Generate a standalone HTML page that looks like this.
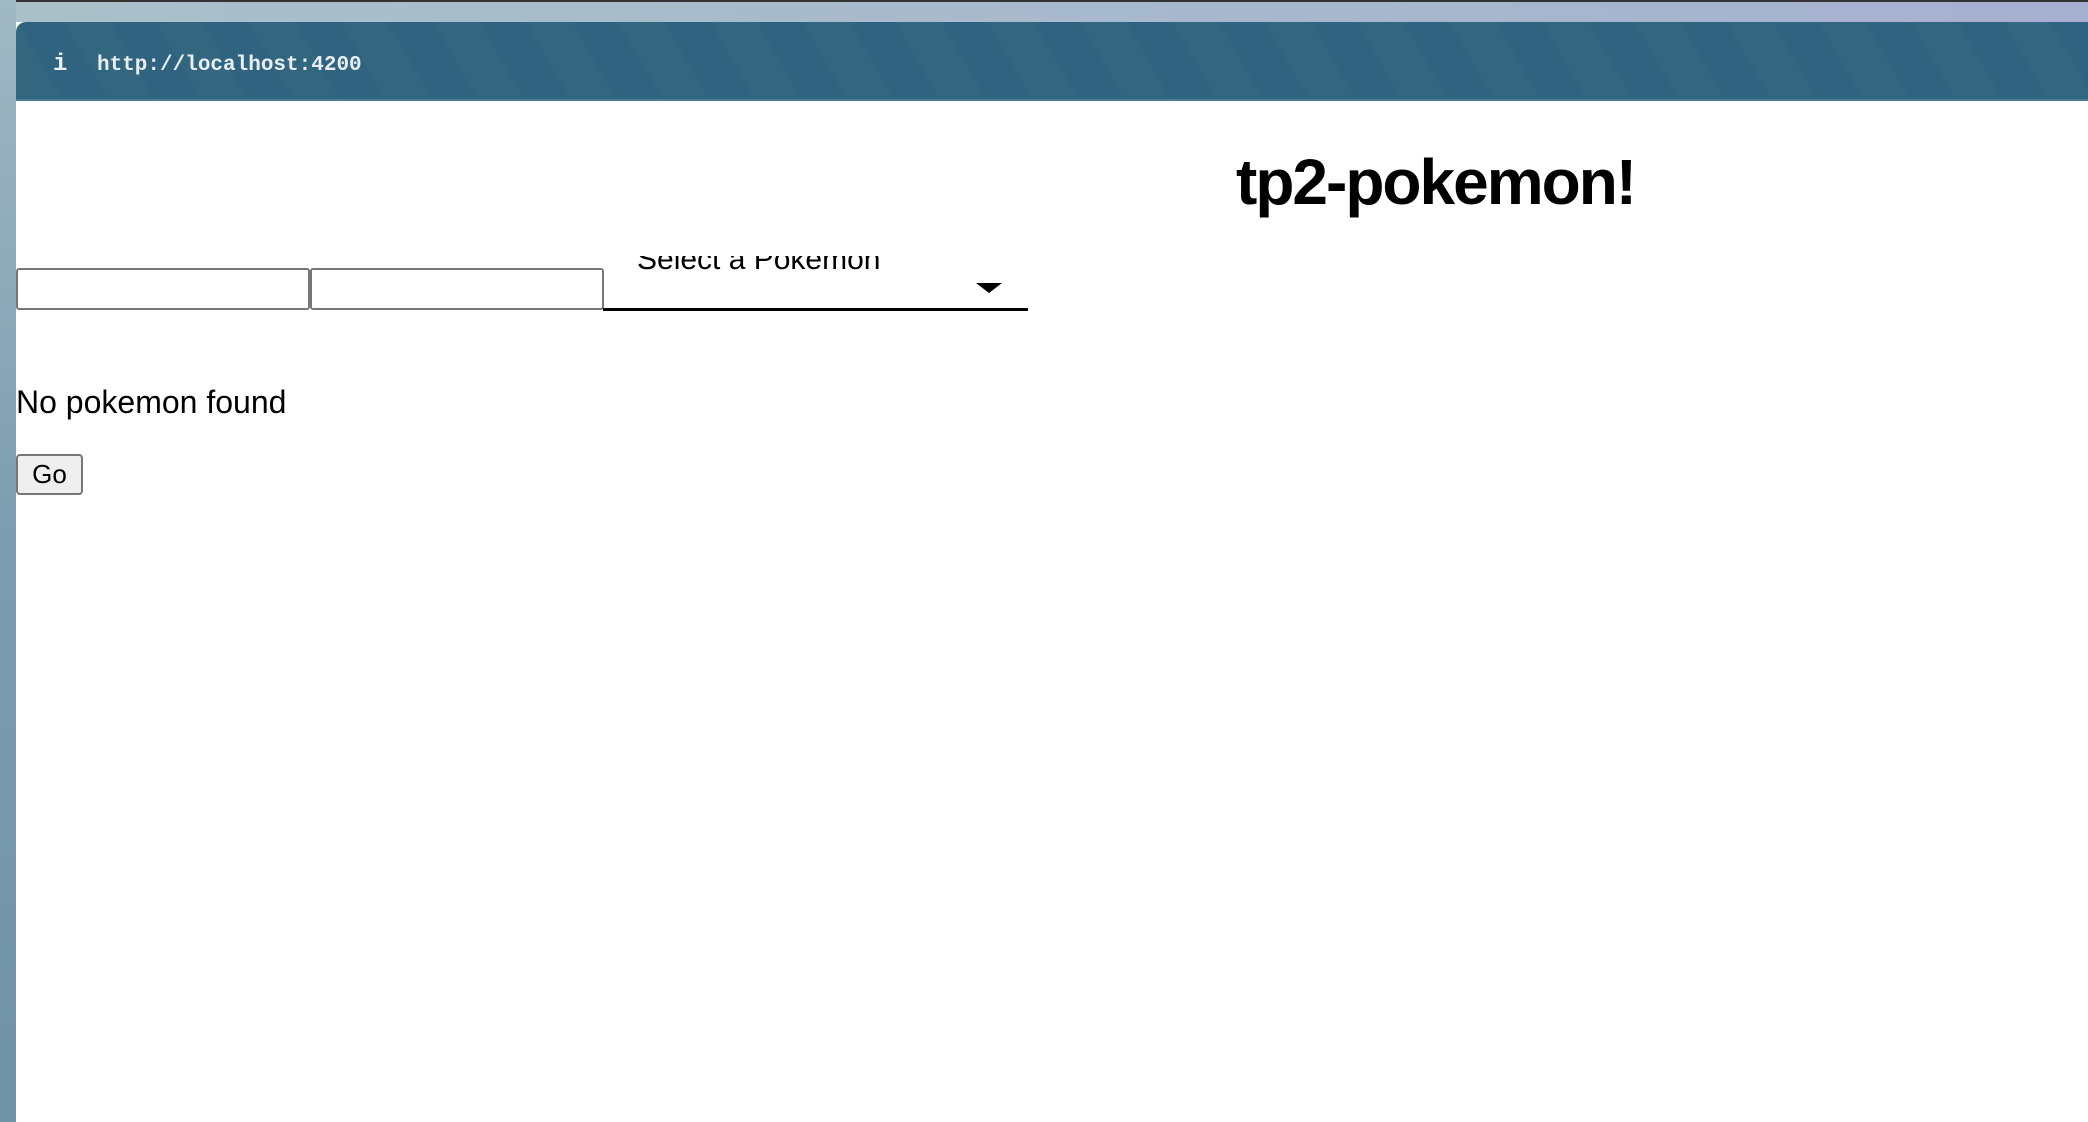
<!DOCTYPE html>
<html><head><meta charset="utf-8"><style>
html,body{margin:0;padding:0;width:2088px;height:1122px;overflow:hidden;background:#fff;font-family:"Liberation Sans",sans-serif;}
#left{position:absolute;left:0;top:0;width:16px;height:1122px;background:linear-gradient(#9fb8c4,#7a9cb0 50%,#6f93a8);}
#top{position:absolute;left:0;top:0;width:2088px;height:22px;background:linear-gradient(90deg,#a9c0c9,#a7b8cc 60%,#a6b0d0);border-top:2px solid #333;box-sizing:border-box;}
#hdr{position:absolute;left:16px;top:22px;width:2072px;height:79px;background:repeating-linear-gradient(60deg,#33667f 0 40px,#2f6380 40px 80px);border-top-left-radius:10px;border-bottom:2px solid #4a7d97;box-sizing:border-box;}
#i{position:absolute;left:53px;top:51px;color:#e8eef2;font:bold 24px "Liberation Mono",monospace;}
#url{position:absolute;left:97px;top:54px;color:#e8eef2;font:bold 21px "Liberation Mono",monospace;}
#title{position:absolute;left:1236px;top:150px;font-weight:bold;font-size:64px;letter-spacing:-2px;line-height:1;}
.in{position:absolute;top:268px;height:42px;width:294px;border:2px solid #777;border-radius:3px;box-sizing:border-box;}
#clip{position:absolute;left:603px;top:256px;width:425px;height:30px;overflow:hidden;}
#sel{position:absolute;left:34px;top:-11px;font-size:30px;line-height:1;}
#arrow{position:absolute;left:976px;top:283px;width:0;height:0;border-left:13px solid transparent;border-right:13px solid transparent;border-top:10px solid #000;}
#ul{position:absolute;left:603px;top:308px;width:425px;height:3px;background:#000;}
#np{position:absolute;left:16px;top:384px;font-size:32px;}
#go{position:absolute;left:16px;top:454px;width:67px;height:41px;border:2px solid #777;border-radius:4px;background:#efefef;box-sizing:border-box;font-size:26px;text-align:center;line-height:37px;}
</style></head><body>
<div id="top"></div><div id="left"></div>
<div id="hdr"></div>
<div id="i">i</div>
<div id="url">http://localhost:4200</div>
<div id="title">tp2-pokemon!</div>
<div class="in" style="left:16px"></div>
<div class="in" style="left:310px"></div>
<div id="clip"><div id="sel">Select a Pokemon</div></div>
<div id="arrow"></div>
<div id="ul"></div>
<div id="np">No pokemon found</div>
<div id="go">Go</div>
</body></html>
